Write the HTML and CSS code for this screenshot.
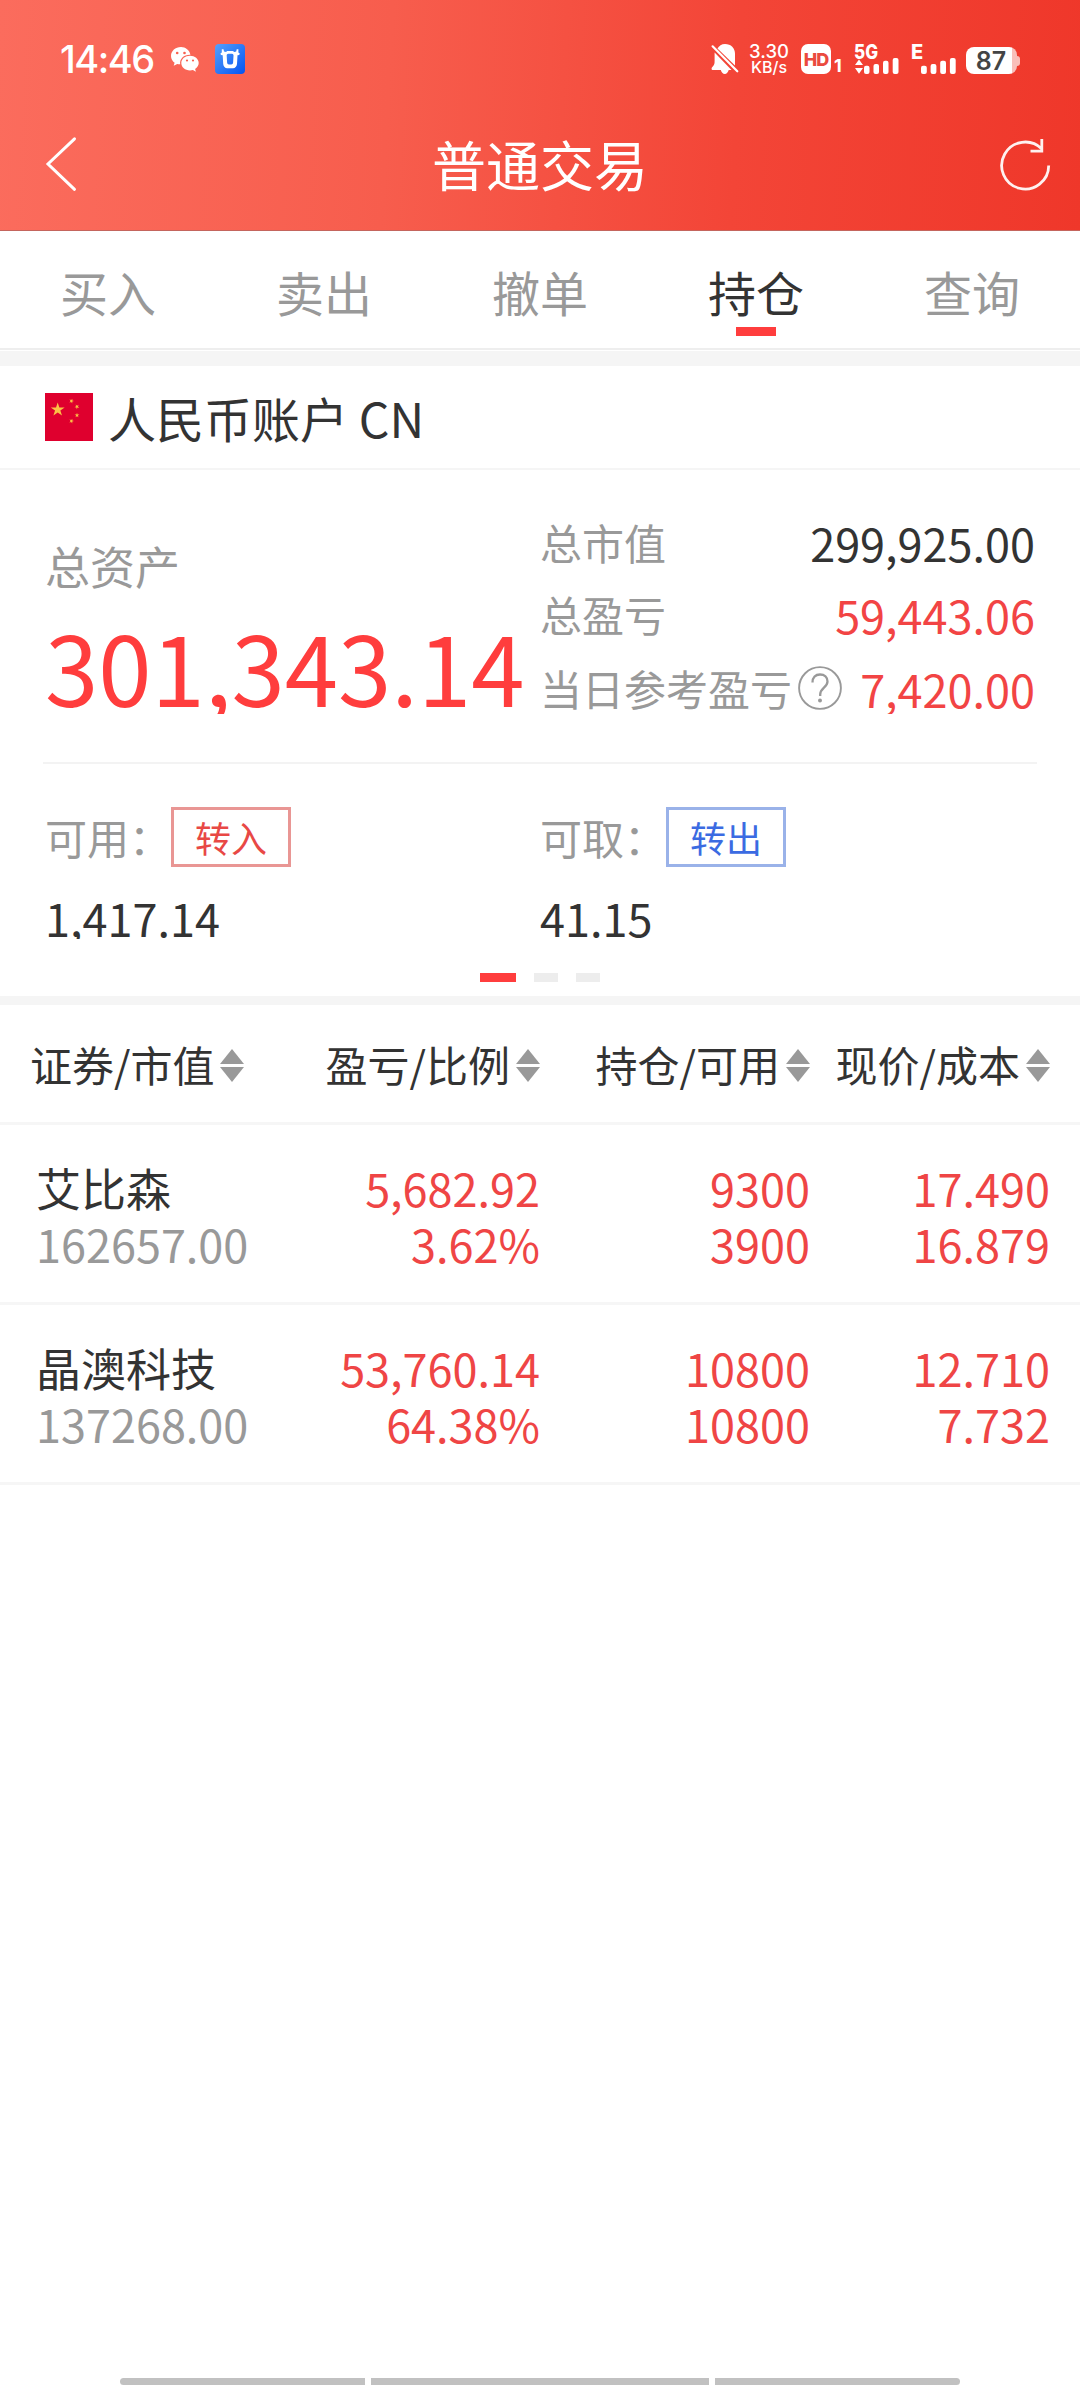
FILE: index.html
```html
<!DOCTYPE html>

<html lang="zh-CN">
  <head>
    <meta charset="UTF-8" />

    <meta name="viewport" content="width=device-width, initial-scale=1.0" />

    <title>普通交易</title>

    <link rel="stylesheet" href="styles.css">
  </head>

  <body>
    <div class="page">
      <header class="header">
        <div class="status-bar">
          <div class="status-left">
            <span class="clock">14:46</span>

            <svg class="wechat" width="28" height="26" viewBox="0 0 28 26">
              <path fill="#fff" d="M10 0C4.300 0 0 4 0 8.900c0 2.800 1.400 5.200 3.600 6.800l-.9 3 3.500-1.800c1 .3 2 .4 3 .4-.9-5.600 3.900-9.900 10.200-9.600C18.500 3.200 14.600 0 10 0z" />
              <path fill="#fff" d="M19 8.800c-4.900 0-8.700 3.200-8.700 7.300s3.800 7.400 8.700 7.400c1 0 2-.2 2.900-.5l3 1.700-.8-2.700c2.200-1.400 3.600-3.500 3.600-5.900 0-4.100-3.900-7.300-8.700-7.300z" />
              <g fill="#f8604f">
                <circle cx="6.200" cy="6" r="1.300" />
                <circle cx="13.500" cy="6" r="1.300" />
                <circle cx="16" cy="13.500" r="1.100" />
                <circle cx="22" cy="13.500" r="1.100" />
              </g>
            </svg>

            <svg class="bull" width="30" height="30" viewBox="0 0 30 30">
              <defs>
                <linearGradient id="bullBg" x1="0" y1="0" x2="1" y2="1">
                  <stop offset="0" stop-color="#56a0fb" />
                  <stop offset="1" stop-color="#0354f2" />
                </linearGradient>
              </defs>
              <rect width="30" height="30" rx="4" fill="url(#bullBg)" />
              <path fill="#fff" fill-rule="evenodd" d="M6.800 5.300h1.700L9 7.600l2 .4 1.200-1h5.800l1.200 1 2-.4.500-2.300h1.700v3.300l1.400.9-.6 1.500-1.700.3-.5 8.700c-.3 2.700-1.800 4.200-4 4.200h-5.800c-2.200 0-3.700-1.500-4-4.200L7.700 11.300 6 11l-.6-1.500 1.400-.9zM13.200 9.800c-1.200.1-1.600.9-1.500 2l.4 6.800c.1 1.300.8 1.900 1.800 1.900h2.400c1 0 1.700-.6 1.800-1.900l.4-6.800c.1-1.100-.3-1.900-1.500-2z" />
            </svg>
          </div>

          <div class="status-right">
            <svg class="bell" width="28" height="30" viewBox="0 0 28 30">
              <path fill="#fff" d="M6.500 4.500C8 1.800 10.500 0 14 0c6 0 10 4 10 10v11.500z" />
              <path fill="#fff" d="M3.600 8.500 20.500 26h-2.800c-.6 2.300-2 4-3.900 4s-3.500-1.700-4-4H2c-1.800 0-2-2 0-3.800 1.500-1.400 1.600-3 1.600-5.400z" />
              <path stroke="#fff" stroke-width="2.200" stroke-linecap="round" d="M1.600 2.300 26.300 27.300" />
            </svg>

            <div class="net-speed">
              <span class="speed-num">3.30</span>
              <span class="speed-unit">KB/s</span>
            </div>

            <div class="hd">
              <span class="hd-box">HD</span>
              <span class="hd-sim">1</span>
            </div>

            <svg class="signal" width="46" height="30" viewBox="0 0 46 30">
              <text class="signal-text" x="0" y="14.700" textLength="24" lengthAdjust="spacingAndGlyphs">5G</text>
              <path fill="#fff" d="M5 15.500 9 21H1zM1 24h8l-4 5.800z" />
              <rect x="10" y="21.700" width="5.500" height="8.300" rx="2" />
              <rect x="19.500" y="20" width="5.500" height="10" rx="2" />
              <rect x="29" y="16.700" width="5.500" height="13.300" rx="2" />
              <rect x="38.700" y="14" width="5.800" height="16" rx="2" />
            </svg>

            <svg class="signal" width="46" height="30" viewBox="0 0 46 30">
              <text class="signal-text" x="0" y="14.700">E</text>
              <rect x="10" y="21.700" width="5.800" height="8.300" rx="2" />
              <rect x="19.600" y="20" width="5.800" height="10" rx="2" />
              <rect x="29.200" y="16.700" width="5.800" height="13.300" rx="2" />
              <rect x="38.900" y="14" width="5.800" height="16" rx="2" />
            </svg>

            <div class="battery">
              <span class="battery-body">87</span>
              <span class="battery-nub"></span>
            </div>
          </div>
        </div>

        <div class="title-bar">
          <svg class="back" width="34" height="56" viewBox="0 0 34 56">
            <path fill="none" stroke="#fff" stroke-width="3" stroke-linecap="round" d="M29.500 2.800 3 28l26.500 25.300" />
          </svg>

          <h1 class="title">普通交易</h1>

          <svg class="refresh" width="54" height="56" viewBox="0 0 54 56">
            <path fill="none" stroke="#fff" stroke-opacity=".93" stroke-width="2.800" d="M49.700 29.500A23.500 23.500 0 1 1 42.600 12.700M42.800 3v12.200H31.500" />
          </svg>
        </div>
      </header>

      <nav class="tabs">
        <div class="tab">买入</div>
        <div class="tab">卖出</div>
        <div class="tab">撤单</div>
        <div class="tab active">持仓</div>
        <div class="tab">查询</div>
      </nav>

      <div class="band band-tabs"></div>

      <div class="account">
        <svg class="flag" width="48" height="48" viewBox="0 0 48 48">
          <defs>
            <path id="star" d="M0-1 .225-.309H.951L.363.118.588.809 0 .382-.588.809-.363.118-.951-.309H-.225z" />
          </defs>
          <rect width="48" height="48" fill="#df002e" />
          <g fill="#fbc246">
            <use href="#star" transform="translate(12.700 16.700) scale(7.300)" />
            <use href="#star" transform="translate(26.500 8) rotate(20) scale(2.500)" />
            <use href="#star" transform="translate(32 13.700) rotate(40) scale(2.500)" />
            <use href="#star" transform="translate(32 22.300) scale(2.500)" />
            <use href="#star" transform="translate(26.500 28) rotate(20) scale(2.500)" />
          </g>
        </svg>
        <span>人民币账户 CN</span>
      </div>

      <section class="summary">
        <div class="assets">
          <div class="total">
            <div class="total-label">总资产</div>
            <div class="total-value">301,343.14</div>
          </div>

          <div class="figures">
            <div class="figure">
              <span class="label">总市值</span>
              <span class="value">299,925.00</span>
            </div>
            <div class="figure">
              <span class="label">总盈亏</span>
              <span class="value red">59,443.06</span>
            </div>
            <div class="figure figure-day">
              <span class="label">当日参考盈亏</span>
              <svg class="help" width="44" height="44" viewBox="0 0 44 44">
                <circle cx="22" cy="22" r="20.900" fill="none" stroke="#999" stroke-width="1.900" />
                <path fill="none" stroke="#999" stroke-width="2.300" d="M14.500 16.500c0-5 3-8 7.500-8s7.500 2.800 7.500 7c0 6-7.300 6.500-7.300 13v1.500" />
                <circle cx="22" cy="34.500" r="2" fill="#999" />
              </svg>
              <span class="value red">7,420.00</span>
            </div>
          </div>
        </div>

        <div class="cash">
          <div class="cash-item">
            <div class="cash-head">
              <span class="label">可用：</span>
              <button class="btn btn-in">转入</button>
            </div>
            <div class="cash-value">1,417.14</div>
          </div>

          <div class="cash-item">
            <div class="cash-head">
              <span class="label">可取：</span>
              <button class="btn btn-out">转出</button>
            </div>
            <div class="cash-value">41.15</div>
          </div>
        </div>

        <div class="pager">
          <i class="dot on"></i>
          <i class="dot"></i>
          <i class="dot"></i>
        </div>
      </section>

      <div class="band band-list"></div>

      <section class="positions">
        <div class="row row-head">
          <div class="col">证券/市值<i class="sort"></i></div>
          <div class="col">盈亏/比例<i class="sort"></i></div>
          <div class="col">持仓/可用<i class="sort"></i></div>
          <div class="col">现价/成本<i class="sort"></i></div>
        </div>

        <div class="row">
          <div class="col name"><span>艾比森</span><span class="sub">162657.00</span></div>
          <div class="col"><span>5,682.92</span><span>3.62%</span></div>
          <div class="col"><span>9300</span><span>3900</span></div>
          <div class="col"><span>17.490</span><span>16.879</span></div>
        </div>

        <div class="row">
          <div class="col name"><span>晶澳科技</span><span class="sub">137268.00</span></div>
          <div class="col"><span>53,760.14</span><span>64.38%</span></div>
          <div class="col"><span>10800</span><span>10800</span></div>
          <div class="col"><span>12.710</span><span>7.732</span></div>
        </div>
      </section>

      <div class="nav-hint">
        <i class="hint-side"></i>
        <i class="hint-mid"></i>
        <i class="hint-side"></i>
      </div>
    </div>
  </body>
</html>
```

FILE: styles.css
```css
* {
  box-sizing: border-box;
}

body {
  margin: 0;
  background-color: #fff;
  color: #333;
  font-family: "Noto Sans CJK SC", "Noto Sans", sans-serif;
}

svg {
  display: block;
  flex: none;
  overflow: visible;
}

.page {
  display: flex;
  flex-direction: column;
  width: 1080px;
  height: 2388px;
  overflow: hidden;
}

/* header */

.header {
  height: 231px;
  border-bottom: 1px solid #c4655d;
  background: linear-gradient(93deg, #fb6c5d 0%, #f75d4d 36%, #f34537 68%, #ef372a 100%) border-box;
  color: #fff;
}

.status-bar {
  display: flex;
  justify-content: space-between;
  height: 102px;
  padding: 44px 60px 0 60px;
  font-family: Inter, Roboto, sans-serif;
}

.status-left,
.status-right {
  display: flex;
  height: 30px;
}

.clock {
  width: 111px;
  font-size: 38px;
  font-weight: 500;
  line-height: 31px;
  letter-spacing: -1.5px;
}

.wechat {
  margin-top: 3px;
}

.bull {
  margin-left: 16px;
}

.net-speed {
  display: flex;
  flex-direction: column;
  align-items: center;
  width: 42px;
  margin-left: 9px;
  font-weight: 500;
  white-space: nowrap;
}

.speed-num {
  font-size: 18.5px;
  line-height: 15px;
}

.speed-unit {
  font-size: 16px;
  line-height: 17px;
}

.hd {
  display: flex;
  align-items: flex-end;
  margin-left: 11px;
}

.hd-box {
  width: 30px;
  height: 30px;
  border-radius: 7px;
  background-color: #fff;
  color: #ea4a3e;
  font-size: 18px;
  font-weight: 800;
  line-height: 31px;
  text-align: center;
  letter-spacing: -1px;
}

.hd-sim {
  width: 9px;
  margin-left: 3px;
  font-size: 18px;
  font-weight: 700;
  line-height: 17px;
}

.signal {
  margin-left: 11px;
  fill: #fff;
}

.signal-text {
  font-size: 20px;
  font-weight: 800;
}

.battery {
  display: flex;
  align-items: center;
  height: 27px;
  margin: 3px 0 0 9px;
}

.battery-body {
  width: 51px;
  height: 27px;
  padding-right: 1px;
  border-radius: 8px;
  background: linear-gradient(to right, #fff 46px, #f9bfba 46px);
  color: #444;
  font-size: 25px;
  font-weight: 600;
  line-height: 28px;
  text-align: center;
}

.battery-nub {
  width: 3px;
  height: 10px;
  border-radius: 0 3px 3px 0;
  background-color: #f9bfba;
}

.title-bar {
  display: flex;
  align-items: center;
  justify-content: space-between;
  height: 124px;
  padding: 0 27px 0 45px;
}

.title {
  margin: 0 0 0 2px;
  font-size: 54px;
  font-weight: 400;
  line-height: 80px;
}

/* tabs */

.tabs {
  display: flex;
  height: 119px;
  border-bottom: 2px solid #eee;
}

.tab {
  display: flex;
  flex: 1;
  flex-direction: column;
  align-items: center;
  padding-top: 25px;
  color: #999;
  font-size: 48px;
  line-height: 70px;
}

.tab.active {
  color: #333;
}

.tab.active::after {
  content: "";
  width: 40px;
  height: 9px;
  margin-top: 1px;
  background-color: #ff3d3d;
}

.band {
  flex: none;
  background-color: #f5f5f5;
}

.band-tabs {
  height: 15px;
  margin-top: 1px;
}

.band-list {
  height: 9px;
}

/* account */

.account {
  display: flex;
  align-items: center;
  gap: 15px;
  height: 104px;
  padding-left: 45px;
  border-bottom: 2px solid #f5f5f5;
  font-size: 48px;
  line-height: 70px;
}

.summary {
  height: 526px;
}

.assets {
  display: flex;
  height: 244px;
  padding: 36px 45px 0 45px;
  overflow: hidden;
}

.total {
  width: 495px;
}

.total-label {
  margin-top: 28px;
  color: #999;
  font-size: 45px;
  line-height: 64px;
}

.total-value {
  height: 98px;
  margin-top: 18px;
  overflow: hidden;
  color: #ff3d3d;
  font-size: 96px;
  line-height: 99px;
}

.figures {
  flex: 1;
}

.figure {
  display: flex;
  align-items: center;
  height: 72px;
}

.figure-day {
  height: 76px;
}

.label {
  color: #999;
  font-size: 42px;
  line-height: 60px;
  white-space: nowrap;
}

.help {
  margin-left: 6px;
}

.value {
  margin-left: auto;
  padding-top: 2px;
  font-size: 45px;
  line-height: 60px;
}

.red {
  color: #f24444;
}

.cash {
  display: flex;
  margin: 48px 43px 0 43px;
  padding: 43px 0 0 2px;
  border-top: 2px solid #f3f3f3;
}

.cash-item {
  width: 495px;
}

.cash-head {
  display: flex;
  align-items: center;
  height: 60px;
}

.btn {
  width: 120px;
  height: 60px;
  padding: 0;
  border: 3px solid;
  background-color: #fff;
  font-family: inherit;
  font-size: 36px;
  line-height: 54px;
}

.btn-in {
  border-color: #e99694;
  color: #e84845;
}

.btn-out {
  border-color: #9ab2e9;
  color: #3b6be2;
}

.cash-value {
  height: 44px;
  margin-top: 28px;
  overflow: hidden;
  font-size: 45px;
  line-height: 46px;
}

.pager {
  display: flex;
  justify-content: center;
  gap: 18px;
  margin-top: 34px;
}

.dot {
  width: 24px;
  height: 9px;
  background-color: #ededed;
}

.dot.on {
  width: 36px;
  background-color: #ff3d3d;
}

/* positions */

.row {
  display: grid;
  grid-template-columns: 250px 260px 270px 240px;
  height: 180px;
  padding: 35px 30px 0 30px;
  border-bottom: 3px solid #f6f6f6;
  font-size: 45px;
  line-height: 56px;
}

.row .col {
  display: flex;
  flex-direction: column;
  align-items: flex-end;
  color: #ef4545;
}

.row .name {
  align-items: flex-start;
  padding-left: 6px;
  color: #333;
}

.name .sub {
  color: #999;
}

.row-head {
  height: 120px;
  padding-top: 29px;
  font-size: 42px;
  line-height: 60px;
}

.row-head .col {
  flex-direction: row;
  align-items: center;
  justify-content: flex-end;
  height: 60px;
  color: #333;
  white-space: nowrap;
}

.row-head .col:first-child {
  justify-content: flex-start;
}

.sort {
  width: 24px;
  margin: 3px 0 0 6px;
}

.sort::before,
.sort::after {
  content: "";
  display: block;
  border: 12px solid transparent;
}

.sort::before {
  border-top: 0;
  border-bottom: 15px solid #999;
}

.sort::after {
  margin-top: 3px;
  border-bottom: 0;
  border-top: 15px solid #999;
}

/* bottom gesture hints */

.nav-hint {
  display: flex;
  justify-content: center;
  gap: 6px;
  margin-top: auto;
  padding-bottom: 3px;
}

.nav-hint i {
  height: 7px;
  background-color: #c1c1c1;
}

.hint-side {
  width: 245px;
}

.hint-mid {
  width: 338px;
}

.hint-side:first-child {
  border-radius: 4px 0 0 4px;
}

.hint-side:last-child {
  border-radius: 0 4px 4px 0;
}
```
